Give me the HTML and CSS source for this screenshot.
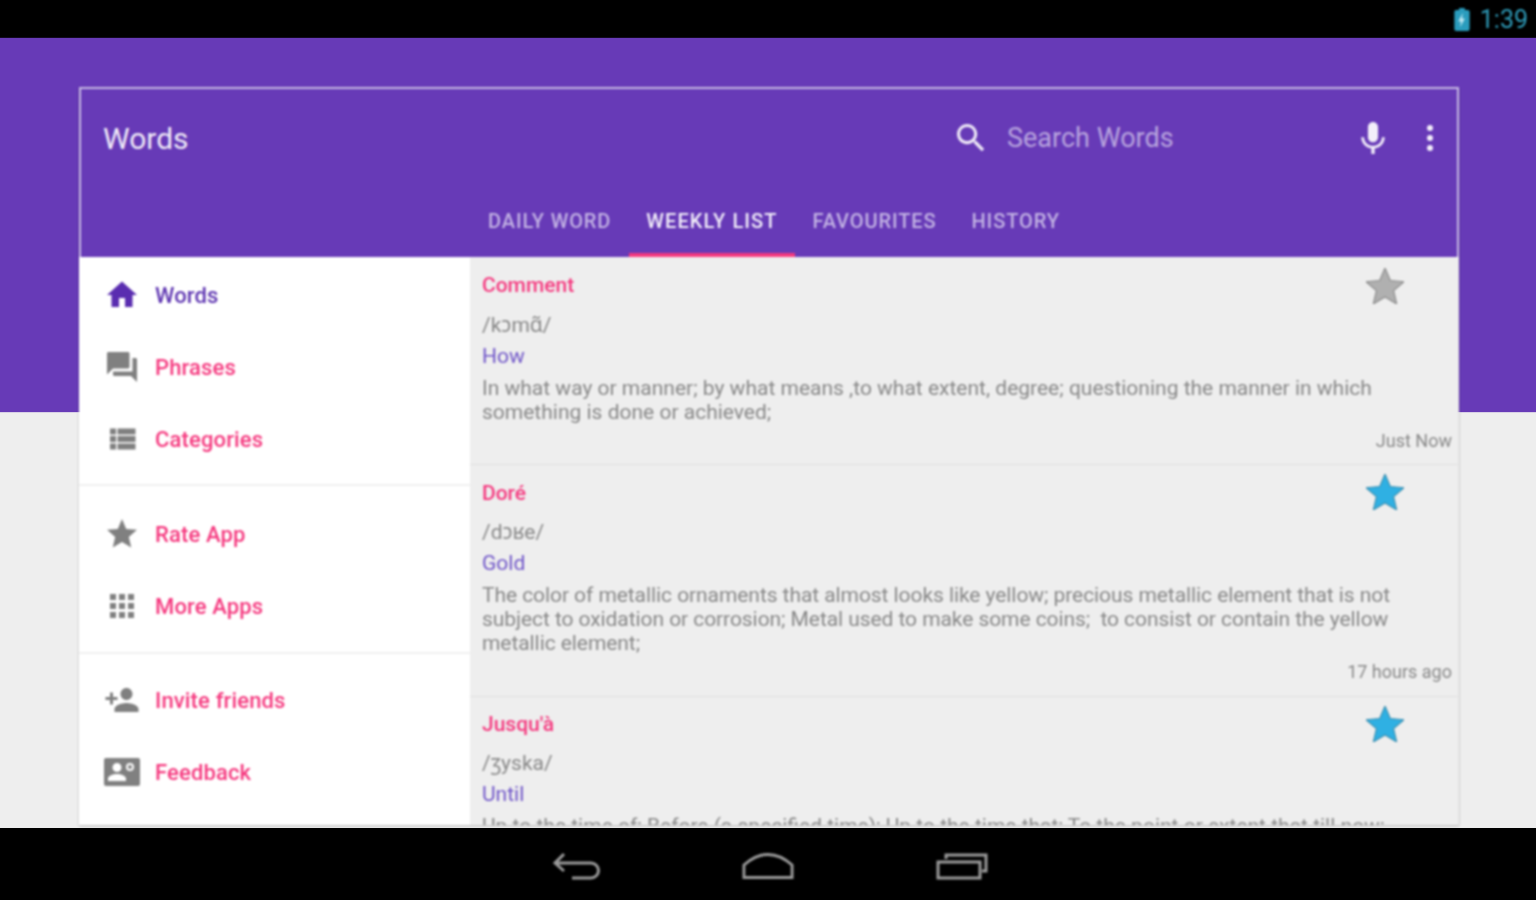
FILE: index.html
```html
<!DOCTYPE html>
<html>
<head>
    <meta charset="utf-8">
    <title>Words</title>
    <link rel="stylesheet" href="styles.css">
</head>
<body>
    <div class="status-bar">
        <svg class="battery" viewBox="0 0 16 24">
            <path class="battery-body" d="M5 0h6v2h3a2 2 0 0 1 2 2v18a2 2 0 0 1-2 2H2a2 2 0 0 1-2-2V4a2 2 0 0 1 2-2h3z"/>
            <path class="battery-bolt" d="M9 5L4 14h3l-1 6 5-9H8z"/>
        </svg>
        <span class="clock">1:39</span>
    </div>

    <div class="screen">
        <div class="band"></div>
        <div class="card">
            <div class="header">
                <div class="toolbar">
                    <span class="app-title">Words</span>
                    <svg class="search-icon" viewBox="3 3 18 18"><path d="M15.5 14h-.79l-.28-.27C15.41 12.59 16 11.11 16 9.5 16 5.91 13.09 3 9.5 3S3 5.91 3 9.5 5.91 16 9.5 16c1.61 0 3.09-.59 4.23-1.57l.27.28v.79l5 4.99L20.49 19l-4.99-5zm-6 0C7.01 14 5 11.99 5 9.5S7.01 5 9.5 5 14 7.01 14 9.5 11.99 14 9.5 14z"/></svg>
                    <span class="search-text">Search Words</span>
                    <svg class="mic-icon" viewBox="5 2 14 19"><path d="M12 14c1.66 0 2.99-1.34 2.99-3L15 5c0-1.66-1.34-3-3-3S9 3.34 9 5v6c0 1.66 1.34 3 3 3zm5.3-3c0 3-2.54 5.1-5.3 5.1S6.7 14 6.7 11H5c0 3.41 2.72 6.23 6 6.72V21h2v-3.28c3.28-.48 6-3.3 6-6.72h-1.7z"/></svg>
                    <svg class="more-icon" viewBox="0 0 6 26"><circle cx="3" cy="3" r="3"/><circle cx="3" cy="13" r="3"/><circle cx="3" cy="23" r="3"/></svg>
                </div>
                <div class="tabs">
                    <span class="tab">Daily Word</span>
                    <span class="tab active">Weekly List</span>
                    <span class="tab">Favourites</span>
                    <span class="tab">History</span>
                </div>
            </div>

            <div class="content">
                <div class="sidebar">
                    <div class="nav-group">
                        <div class="nav-row current">
                            <svg class="nav-icon" viewBox="0 0 24 24"><path d="M10 20v-6h4v6h5v-8h3L12 3 2 12h3v8z"/></svg>
                            <span>Words</span>
                        </div>
                        <div class="nav-row">
                            <svg class="nav-icon" viewBox="0 0 24 24"><path d="M21 6h-2v9H6v2c0 .55.45 1 1 1h11l4 4V7c0-.55-.45-1-1-1zm-4 6V3c0-.55-.45-1-1-1H3c-.55 0-1 .45-1 1v14l4-4h10c.55 0 1-.45 1-1z"/></svg>
                            <span>Phrases</span>
                        </div>
                        <div class="nav-row">
                            <svg class="nav-icon" viewBox="0 0 24 24"><path d="M4 14h4v-4H4v4zm0 5h4v-4H4v4zM4 9h4V5H4v4zm5 5h12v-4H9v4zm0 5h12v-4H9v4zM9 5v4h12V5H9z"/></svg>
                            <span>Categories</span>
                        </div>
                    </div>
                    <div class="nav-group">
                        <div class="nav-row">
                            <svg class="nav-icon" viewBox="0 0 24 24"><path d="M12 17.27L18.18 21l-1.64-7.03L22 9.24l-7.19-.61L12 2 9.19 8.63 2 9.24l5.46 4.73L5.82 21z"/></svg>
                            <span>Rate App</span>
                        </div>
                        <div class="nav-row">
                            <svg class="nav-icon" viewBox="0 0 24 24"><path d="M4 8h4V4H4v4zm6 12h4v-4h-4v4zm-6 0h4v-4H4v4zm0-6h4v-4H4v4zm6 0h4v-4h-4v4zm6-10v4h4V4h-4zm-6 4h4V4h-4v4zm6 6h4v-4h-4v4zm0 6h4v-4h-4v4z"/></svg>
                            <span>More Apps</span>
                        </div>
                    </div>
                    <div class="nav-group">
                        <div class="nav-row">
                            <svg class="nav-icon" viewBox="0 0 24 24"><path d="M15 12c2.21 0 4-1.79 4-4s-1.79-4-4-4-4 1.79-4 4 1.79 4 4 4zm-9-2V7H4v3H1v2h3v3h2v-3h3v-2H6zm9 4c-2.67 0-8 1.34-8 4v2h16v-2c0-2.66-5.33-4-8-4z"/></svg>
                            <span>Invite friends</span>
                        </div>
                        <div class="nav-row">
                            <svg class="nav-icon" viewBox="0 0 36 28"><path fill-rule="evenodd" d="M2 0h32a2 2 0 0 1 2 2v24a2 2 0 0 1-2 2H2a2 2 0 0 1-2-2V2a2 2 0 0 1 2-2zm11 5a4.500 4.500 0 1 0 0 9 4.500 4.500 0 0 0 0-9zm0 11c-4 0-9 1.800-9 4.500V23h18v-2.500c0-2.700-5-4.500-9-4.500zM26 5a4 4 0 1 0 0 8 4 4 0 0 0 0-8zm0 2a2 2 0 1 1 0 4 2 2 0 0 1 0-4z"/></svg>
                            <span>Feedback</span>
                        </div>
                    </div>
                </div>

                <div class="word-list">
                    <div class="word">
                        <svg class="star" viewBox="2 2 20 19"><path d="M12 17.27L18.18 21l-1.64-7.03L22 9.24l-7.19-.61L12 2 9.19 8.63 2 9.24l5.46 4.73L5.82 21z"/></svg>
                        <div class="word-title">Comment</div>
                        <div class="word-phonetic">/kɔmɑ̃/</div>
                        <div class="word-meaning">How</div>
                        <div class="word-def">In what way or manner; by what means ,to what extent, degree; questioning the manner in which something is done or achieved;</div>
                        <div class="word-time">Just Now</div>
                    </div>
                    <div class="word long">
                        <svg class="star saved" viewBox="2 2 20 19"><path d="M12 17.27L18.18 21l-1.64-7.03L22 9.24l-7.19-.61L12 2 9.19 8.63 2 9.24l5.46 4.73L5.82 21z"/></svg>
                        <div class="word-title">Doré</div>
                        <div class="word-phonetic">/dɔʁe/</div>
                        <div class="word-meaning">Gold</div>
                        <div class="word-def">The color of metallic ornaments that almost looks like yellow; precious metallic element that is not subject to oxidation or corrosion; Metal used to make some coins; &nbsp;to consist or contain the yellow metallic element;</div>
                        <div class="word-time">17 hours ago</div>
                    </div>
                    <div class="word last">
                        <svg class="star saved" viewBox="2 2 20 19"><path d="M12 17.27L18.18 21l-1.64-7.03L22 9.24l-7.19-.61L12 2 9.19 8.63 2 9.24l5.46 4.73L5.82 21z"/></svg>
                        <div class="word-title">Jusqu'à</div>
                        <div class="word-phonetic">/ʒyska/</div>
                        <div class="word-meaning">Until</div>
                        <div class="word-def">Up to the time of; Before (a specified time); Up to the time that; To the point or extent that till now;</div>
                    </div>
                </div>
            </div>
        </div>
    </div>

    <div class="nav-bar">
        <svg class="nav-btn" viewBox="0 0 50 28"><path d="M12 2L3 11l9 8M3 11h36a7.500 7.500 0 0 1 0 15H20"/></svg>
        <svg class="nav-btn" viewBox="0 0 54 28"><path d="M2 26V13Q14 2 27 2t25 11v13z"/></svg>
        <svg class="nav-btn" viewBox="0 0 52 28"><path d="M10 7V3h40v16h-4M2 10h42v16H2z"/></svg>
    </div>
</body>
</html>
```

FILE: styles.css
```css
* {
    box-sizing: border-box;
}

body {
    margin: 0;
    height: 100vh;
    overflow: hidden;
    display: flex;
    flex-direction: column;
    background-color: #eeeeee;
    font-family: Roboto, "Noto Sans", "DejaVu Sans", sans-serif;
}

/* status bar */
.status-bar {
    height: 38px;
    flex: none;
    background-color: #000;
    display: flex;
    align-items: center;
    justify-content: flex-end;
    padding-right: 8px;
}

.battery {
    width: 16px;
    height: 23px;
    margin-right: 10px;
    filter: blur(0.8px);
}

.battery-body {
    fill: #2a9cbd;
}

.battery-bolt {
    fill: #bfe7f2;
}

.clock {
    font-size: 25px;
    color: #2f9dbb;
    filter: blur(0.8px);
}

/* purple band + card */
.screen {
    flex: 1;
    position: relative;
    padding: 49px 77px 2px 79px;
}

.band {
    position: absolute;
    top: 0;
    left: 0;
    right: 0;
    height: 374px;
    background-color: #673ab7;
    box-shadow: 0 0 1px #673ab7;
}

.card {
    position: relative;
    height: 738px;
    display: flex;
    flex-direction: column;
    overflow: hidden;
    box-shadow: 0 1px 2px rgba(0, 0, 0, 0.25);
    filter: blur(0.8px);
}

.header {
    flex: none;
    height: 170px;
    background-color: #673ab7;
    border: 2px solid #c8bbe4;
    border-bottom: none;
}

.toolbar {
    height: 98px;
    display: flex;
    align-items: center;
    padding-left: 22px;
}

.app-title {
    font-size: 30px;
    color: #f0ebf8;
    width: 854px;
}

.search-icon {
    width: 28px;
    height: 28px;
    fill: #efeaf7;
    margin-right: 22px;
}

.search-text {
    font-size: 27px;
    color: #b8a4de;
    width: 354px;
}

.mic-icon {
    width: 24px;
    height: 32px;
    fill: #f3effa;
    margin-right: 41px;
}

.more-icon {
    width: 8px;
    height: 26px;
    fill: #f3effa;
}

.tabs {
    height: 70px;
    display: flex;
    padding-left: 389.5px;
}

.tab {
    padding: 2px 17.5px 0;
    display: flex;
    align-items: center;
    border-bottom: 4px solid transparent;
    font-size: 20px;
    font-weight: 500;
    letter-spacing: 0.9px;
    text-transform: uppercase;
    color: #c3b3e4;
}

.tab.active {
    color: #f3effa;
    letter-spacing: 1.1px;
    border-bottom-color: #f5397f;
}

.content {
    flex: 1;
    display: flex;
    min-height: 0;
}

/* left drawer */
.sidebar {
    width: 391px;
    flex: none;
    background-color: #fff;
    padding-top: 2px;
}

.nav-group {
    padding-bottom: 9px;
    margin-bottom: 12px;
    border-bottom: 2px solid #f0f0f0;
}

.nav-group:nth-child(2) {
    padding-bottom: 10px;
    margin-bottom: 10px;
}

.nav-group:last-child {
    border-bottom: none;
}

.nav-row {
    height: 72px;
    display: flex;
    align-items: center;
    padding-left: 25px;
    gap: 15px;
    font-size: 22px;
    font-weight: 500;
    letter-spacing: 0.15px;
    color: #f5397f;
}

.nav-icon {
    width: 36px;
    height: 36px;
    flex: none;
    fill: #808080;
}

.nav-row.current {
    color: #5e35b1;
}

.nav-row.current .nav-icon {
    fill: #5a2db0;
}

/* word cards */
.word-list {
    flex: 1;
    background-color: #eeeeee;
    border-top: 1px solid #f4f4f4;
    border-right: 1px solid #e2e2e2;
    overflow: hidden;
}

.word {
    position: relative;
    padding: 15px 6px 11px 12px;
    border-bottom: 1px solid #e0e0e0;
    font-size: 21px;
    line-height: 24px;
    color: #888888;
}

.word.long {
    padding-bottom: 12px;
}

.word.long .word-title {
    margin-top: 1px;
}

.word.long .word-phonetic,
.word.last .word-phonetic {
    margin-top: 15px;
}

.word.long .word-def {
    letter-spacing: -0.07px;
}

.word.last {
    border-bottom: none;
}

.star {
    position: absolute;
    top: 10px;
    right: 54px;
    width: 38px;
    height: 36px;
    fill: #b0b0b0;
    stroke: #8a8a8a;
    stroke-width: 0.6;
}

.star.saved {
    top: 9px;
    fill: #2fb0e3;
    stroke: #3c8fb0;
}

.word-title {
    font-weight: 500;
    color: #f5397f;
}

.word-phonetic {
    margin-top: 16px;
}

.word-meaning {
    margin-top: 7px;
    color: #6f55c8;
}

.word-def {
    margin-top: 8px;
}

.word-time {
    margin-top: 5px;
    text-align: right;
    font-size: 18px;
}

/* android buttons */
.nav-bar {
    height: 72px;
    flex: none;
    background-color: #000;
    display: flex;
    align-items: center;
    justify-content: center;
    gap: 139px;
    padding: 4px 0 0 3px;
}

.nav-btn {
    width: 52px;
    height: 28px;
    fill: none;
    stroke: #9a9a9a;
    stroke-width: 3;
    filter: blur(0.8px);
}

.nav-btn:last-child {
    margin-left: 3px;
}
```
